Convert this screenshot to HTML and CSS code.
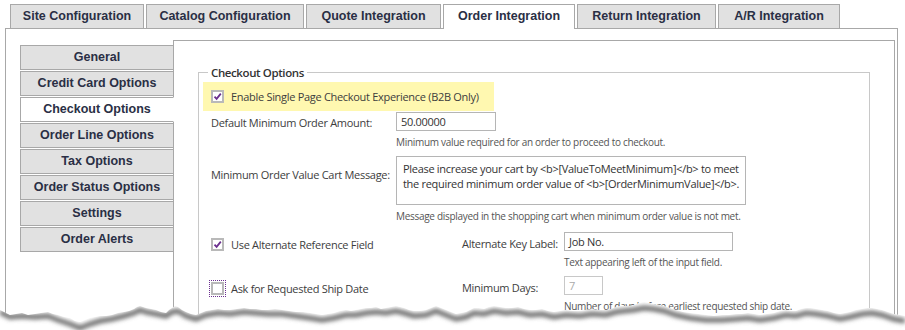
FILE: index.html
```html
<!DOCTYPE html>
<html lang="en">
<head>
    <meta charset="UTF-8">
    <title>Order Integration - Checkout Options</title>
    <link rel="stylesheet" href="styles.css">
</head>
<body>

    <ul class="tabs">
        <li>Site Configuration</li>
        <li>Catalog Configuration</li>
        <li>Quote Integration</li>
        <li class="active">Order Integration</li>
        <li>Return Integration</li>
        <li>A/R Integration</li>
    </ul>

    <div class="panel">
        <ul class="nav">
            <li>General</li>
            <li>Credit Card Options</li>
            <li class="active">Checkout Options</li>
            <li>Order Line Options</li>
            <li>Tax Options</li>
            <li>Order Status Options</li>
            <li>Settings</li>
            <li>Order Alerts</li>
        </ul>

        <div class="content">
            <fieldset>
                <legend>Checkout Options</legend>

                <div class="highlight">
                    <span class="check checked"><svg viewBox="0 0 9 9"><path d="M1.5 4.6 L3.6 6.8 L7.8 1.6"/></svg></span>
                    <span>Enable Single Page Checkout Experience (B2B Only)</span>
                </div>

                <div class="row first">
                    <label>Default Minimum Order Amount:</label>
                    <div>
                        <div class="input amount">50.00000</div>
                        <p class="hint">Minimum value required for an order to proceed to checkout.</p>
                    </div>
                </div>

                <div class="row">
                    <label class="lbl-msg">Minimum Order Value Cart Message:</label>
                    <div>
                        <div class="input message">Please increase your cart by &lt;b&gt;[ValueToMeetMinimum]&lt;/b&gt; to meet<br>the required minimum order value of &lt;b&gt;[OrderMinimumValue]&lt;/b&gt;.</div>
                        <p class="hint">Message displayed in the shopping cart when minimum order value is not met.</p>
                    </div>
                </div>

                <div class="pair">
                    <div class="opt">
                        <span class="check checked"><svg viewBox="0 0 9 9"><path d="M1.5 4.6 L3.6 6.8 L7.8 1.6"/></svg></span>
                        <span>Use Alternate Reference Field</span>
                    </div>
                    <label>Alternate Key Label:</label>
                    <div>
                        <div class="input keylabel">Job No.</div>
                        <p class="hint">Text appearing left of the input field.</p>
                    </div>
                </div>

                <div class="pair">
                    <div class="opt">
                        <span class="check focused"></span>
                        <span>Ask for Requested Ship Date</span>
                    </div>
                    <label>Minimum Days:</label>
                    <div>
                        <div class="input days">7</div>
                        <p class="hint">Number of days before earliest requested ship date.</p>
                    </div>
                </div>
            </fieldset>
        </div>
    </div>

    <!-- torn paper edge -->
    <svg class="torn" width="905" height="40" viewBox="0 290 905 40">
        <defs>
            <filter id="blur" x="-5%" y="-50%" width="110%" height="200%">
                <feGaussianBlur stdDeviation="2"/>
            </filter>
            <clipPath id="below">
                <path d="M0 306 L4 308 L10 311 L16 310 L22 309 L28 311 L35 310 L41 309 L48 308 L53 310 L58 311 L64 313 L70 314 L75 317 L80 318 L85 316 L90 314 L95 313 L100 312 L106 312 L112 311 L118 309 L124 308 L129 307 L134 305 L137 303 L140 302 L143 303 L146 304 L151 305 L156 306 L161 308 L166 309 L169 306 L172 304 L175 302 L178 303 L182 306 L186 308 L191 310 L196 311 L201 309 L206 307 L212 306 L218 305 L224 306 L230 306 L237 305 L244 304 L250 305 L256 305 L262 306 L268 306 L275 305 L282 306 L289 307 L296 308 L303 308 L310 309 L316 310 L322 311 L328 310 L334 309 L340 307 L346 306 L351 307 L356 306 L361 305 L366 304 L371 304 L376 303 L381 305 L386 304 L391 303 L396 302 L400 303 L404 304 L409 306 L414 307 L420 307 L426 306 L431 304 L436 302 L441 304 L446 306 L451 308 L456 310 L461 309 L466 308 L470 306 L474 304 L479 304 L484 305 L489 303 L494 302 L500 303 L506 304 L512 304 L518 303 L524 305 L530 306 L536 306 L542 305 L548 307 L554 308 L560 307 L566 306 L573 307 L580 307 L586 306 L592 305 L599 306 L606 306 L611 305 L616 303 L620 302 L624 302 L629 302 L634 301 L639 299 L644 298 L649 299 L654 300 L659 301 L664 302 L670 304 L676 306 L683 308 L690 309 L698 310 L706 311 L714 312 L722 311 L729 311 L736 310 L742 310 L748 309 L754 310 L760 311 L767 310 L774 309 L780 307 L786 306 L791 307 L796 307 L801 305 L806 304 L811 304 L816 305 L822 306 L828 307 L834 309 L840 310 L845 309 L850 308 L856 306 L862 305 L867 304 L872 304 L877 305 L882 306 L888 308 L894 310 L900 311 L905 312 L905 330 L0 330 Z"/>
            </clipPath>
        </defs>
        <rect x="0" y="290" width="905" height="40" fill="#fff" clip-path="url(#below)"/>
        <g clip-path="url(#below)">
            <path class="shade" filter="url(#blur)" d="M0 308 L10 313 L22 312 L35 313 L48 312 L58 316 L70 320 L80 324 L90 320 L100 317 L112 315 L124 312 L134 309 L140 306 L146 308 L156 310 L166 312 L172 308 L178 307 L186 312 L196 315 L206 311 L218 309 L230 310 L244 308 L256 309 L268 310 L282 310 L296 312 L310 314 L322 316 L334 314 L346 311 L356 311 L366 309 L376 308 L386 309 L396 307 L404 309 L414 312 L426 311 L436 307 L446 311 L456 315 L466 313 L474 309 L484 310 L494 307 L506 309 L518 308 L530 311 L542 310 L554 313 L566 311 L580 312 L592 310 L606 311 L616 308 L624 307 L634 306 L644 304 L654 305 L664 307 L676 311 L690 314 L706 316 L722 316 L736 315 L748 314 L760 316 L774 314 L786 311 L796 312 L806 309 L816 310 L828 312 L840 315 L850 313 L862 310 L872 309 L882 311 L894 315 L905 317"/>
        </g>
    </svg>

</body>
</html>
```

FILE: styles.css
```css
/* Base */
body {
    margin: 0;
    padding-top: 4px;
    background-color: #ffffff;
    font-family: "Open Sans", "Noto Sans", sans-serif;
    font-size: 11px;
    letter-spacing: -0.3px;
    color: #3d3d3d;
    overflow: hidden;
    position: relative;
    height: 326px;
}
ul {
    list-style: none;
    margin: 0;
    padding: 0;
}

/* Top tabs */
.tabs {
    display: flex;
    gap: 2px;
    margin-left: 10px;
    position: relative;
    z-index: 2;
}
.tabs li {
    box-sizing: border-box;
    height: 24px;
    line-height: 23px;
    text-align: center;
    background-color: #e1e1e1;
    border: 1px solid #a8a8a8;
    border-bottom: none;
    white-space: nowrap;
    font-family: "Liberation Sans", Arial, sans-serif;
    font-weight: bold;
    font-size: 12.5px;
    letter-spacing: 0;
    color: #2a2f45;
}
.tabs li:nth-child(1) { width: 134px; }
.tabs li:nth-child(2) { width: 158px; }
.tabs li:nth-child(3) { width: 135px; }
.tabs li:nth-child(4) { width: 132px; }
.tabs li:nth-child(5) { width: 139px; }
.tabs li:nth-child(6) { width: 122px; }
.tabs li.active {
    background-color: #ffffff;
    height: 25px;
    margin-bottom: -1px;
}

/* Outer panel */
.panel {
    display: flex;
    margin-left: 5px;
    width: 875px;
    height: 320px;
    padding: 11px 2px 0 14px;
    border: 1px solid #a8a8a8;
}

/* Left side navigation */
.nav {
    width: 154px;
    flex: none;
    margin-top: 5px;
    margin-right: -1px;
    position: relative;
    z-index: 1;
}
.nav li {
    height: 23px;
    line-height: 23px;
    margin-bottom: 1px;
    background-color: #e1e1e1;
    border: 1px solid #a8a8a8;
    text-align: center;
    white-space: nowrap;
    font-family: "Liberation Sans", Arial, sans-serif;
    font-weight: bold;
    font-size: 12.5px;
    letter-spacing: 0;
    color: #2a2f45;
}
.nav li.active {
    background-color: #ffffff;
    border-right-color: #ffffff;
}

/* Content area */
.content {
    flex: 1;
    border: 1px solid #a8a8a8;
    border-bottom: none;
    padding: 24px 24px 0 24px;
}
fieldset {
    margin: 0;
    border: 1px solid #c8c8c8;
    border-bottom: none;
    padding: 2px 4px 0 4px;
    height: 260px;
}
legend {
    margin-left: 5px;
    padding: 0 3px;
    font-weight: 600;
    font-size: 11.5px;
    letter-spacing: -0.4px;
    color: #333333;
}

/* Checkboxes */
.check {
    display: inline-block;
    width: 9px;
    height: 9px;
    border: 2px solid #b9b9b9;
    background-color: #ffffff;
    margin-right: 7px;
    flex: none;
}
.check svg {
    display: block;
    width: 9px;
    height: 9px;
}
.check path {
    fill: none;
    stroke: #6b2f8f;
    stroke-width: 1.8;
}
.check.focused {
    outline: 1px dotted #6b2f8f;
    outline-offset: 1px;
}

.highlight {
    display: flex;
    align-items: center;
    width: 283px;
    height: 29px;
    padding-left: 8px;
    background-color: #fff8b0;
}
.opt {
    display: flex;
    align-items: center;
    padding-left: 8px;
    white-space: nowrap;
}

/* Rows */
.row {
    display: grid;
    grid-template-columns: 185px 1fr;
    padding-left: 8px;
    margin-top: 1px;
}
.row label {
    padding-top: 3px;
    white-space: nowrap;
}
.row .lbl-msg {
    padding-top: 11px;
}
.pair {
    display: grid;
    grid-template-columns: 259px 102px 1fr;
    align-items: start;
    margin-top: 3px;
}
.pair .opt {
    padding-top: 5px;
}
.pair label {
    padding-top: 4px;
    white-space: nowrap;
}
.pair .hint {
    margin-bottom: 4px;
}

.input {
    border: 1px solid #b5b5b5;
    background-color: #ffffff;
    padding: 0 4px;
    height: 17px;
    line-height: 17px;
    color: #333333;
    white-space: nowrap;
}
.amount {
    width: 90px;
}
.message {
    width: 336px;
    height: 42px;
    padding: 4px 6px 1px 6px;
    line-height: 15px;
}
.keylabel {
    width: 159px;
}
.days {
    width: 29px;
    color: #aaaaaa;
    border-color: #c8c8c8;
}
.hint {
    margin: 4px 0 6px 0;
    font-size: 10px;
    color: #555555;
    white-space: nowrap;
}

/* Torn edge drawn over the bottom of the page */
.torn {
    position: absolute;
    left: 0;
    bottom: -4px;
    z-index: 5;
}
.shade {
    fill: none;
    stroke: #6e6e6e;
    stroke-width: 5;
}
```
